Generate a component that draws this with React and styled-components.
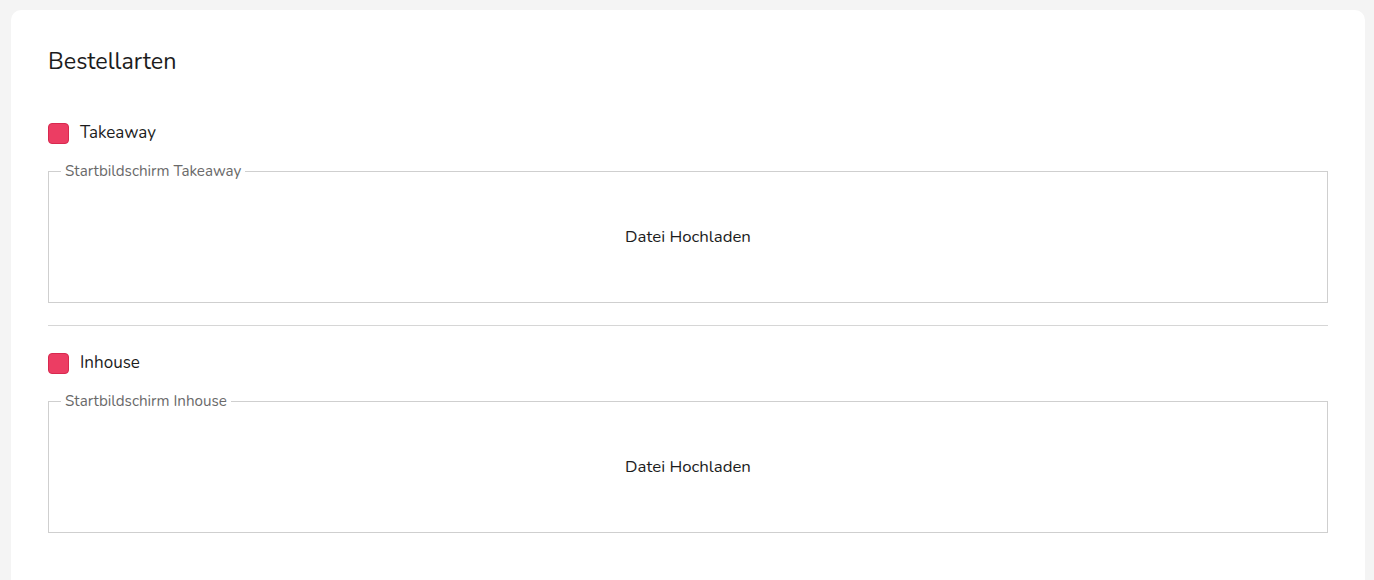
import React from 'react';
import styled, { createGlobalStyle } from 'styled-components';

const GlobalStyle = createGlobalStyle`
  body {
    margin: 0;
    background: #f4f4f4;
    font-family: "Nunito", "Open Sans", "Noto Sans", sans-serif;
    color: #1c1c1c;
  }
`;

const orderTypes = [
  { id: 'takeaway', label: 'Takeaway', legend: 'Startbildschirm Takeaway' },
  { id: 'inhouse', label: 'Inhouse', legend: 'Startbildschirm Inhouse' },
];

const App = () => {
  return (
    <>
      <GlobalStyle />
      <Page>
        <Card>
          <Title>Bestellarten</Title>
          {orderTypes.map((type, i) => (
            <Section key={type.id}>
              {i > 0 && <Divider />}
              <CheckRow>
                <CheckBox />
                <CheckLabel>{type.label}</CheckLabel>
              </CheckRow>
              <UploadField>
                <Legend>{type.legend}</Legend>
                <UploadArea>Datei Hochladen</UploadArea>
              </UploadField>
            </Section>
          ))}
        </Card>
      </Page>
    </>
  );
};

const Page = styled.div`
  padding: 10px 9px 0 11px;
  min-height: 580px;
  box-sizing: border-box;
`;

const Card = styled.div`
  background: #fff;
  border-radius: 10px;
  padding: 36px 37px 40px;
  min-height: 600px;
  box-sizing: border-box;
`;

const Title = styled.h2`
  margin: 0 0 46px;
  font-size: 23.3px;
  line-height: 30px;
  font-weight: 400;
  color: #1c1c1c;
`;

const Section = styled.div`
  display: flex;
  flex-direction: column;
`;

const Divider = styled.hr`
  margin: 22px 0 26px;
  border: none;
  border-top: 1px solid #d6d6d6;
`;

const CheckRow = styled.label`
  display: flex;
  align-items: center;
  gap: 11px;
  height: 22px;
  margin-bottom: 18px;
`;

const CheckBox = styled.span`
  width: 21px;
  height: 21px;
  box-sizing: border-box;
  border-radius: 4px;
  background: #ec3d63;
  border: 1px solid #d8294f;
`;

const CheckLabel = styled.span`
  font-size: 17px;
  line-height: 22px;
  color: #1c1c1c;
`;

const UploadField = styled.fieldset`
  margin: 0;
  padding: 0 12px;
  border: 1px solid #cfcfcf;
`;

const Legend = styled.legend`
  padding: 0 4px;
  font-size: 15.2px;
  line-height: 19px;
  color: #6a6a6a;
`;

const UploadArea = styled.div`
  height: 131px;
  margin-top: -10px;
  display: flex;
  align-items: center;
  justify-content: center;
  font-size: 16.8px;
  line-height: 22px;
  color: #1c1c1c;
`;

export default App;
